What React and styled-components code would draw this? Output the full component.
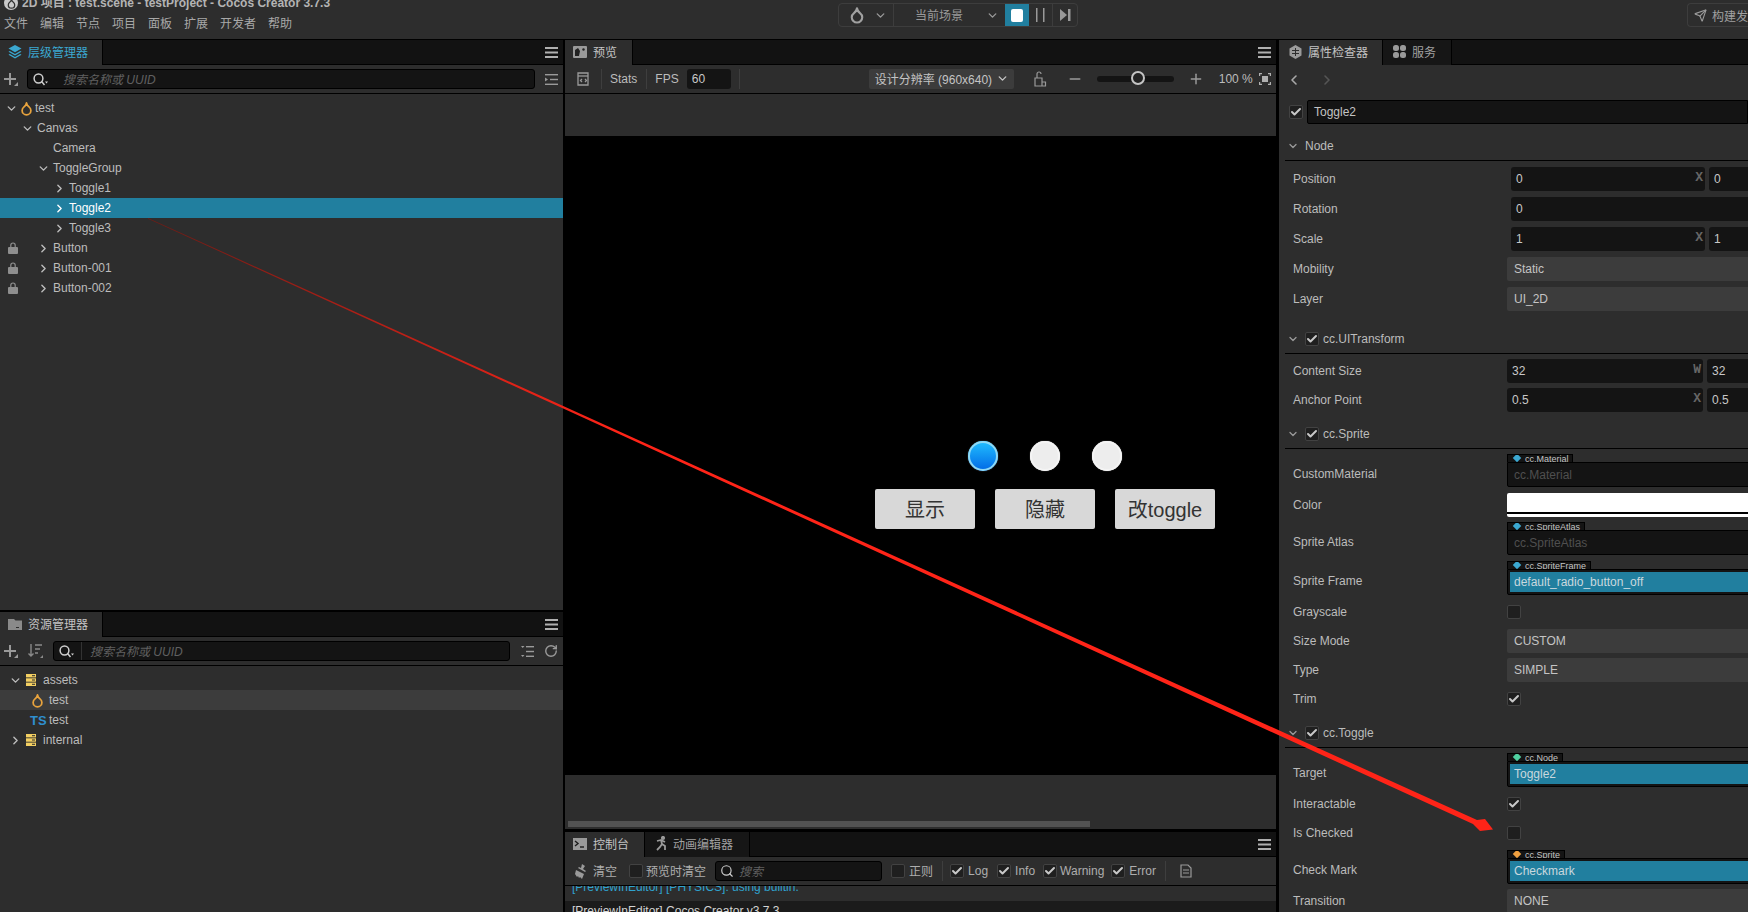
import React from 'react';
import styled, { createGlobalStyle, css } from 'styled-components';
import { Check, ChevronDown, ChevronRight, ChevronLeft, Droplet, Plus, Minus, RotateCw, Send, Search } from 'lucide-react';

const Global = createGlobalStyle`
  html, body { margin: 0; padding: 0; background: #000; overflow: hidden; }
  body { font-family: "Liberation Sans", "Noto Sans CJK SC", sans-serif; font-size: 12px; color: #bcbcbc; }
  * { box-sizing: border-box; }
`;

const ml = css`margin-left: ${p => p.$ml || 0}px;`;

const Page = styled.div`
  position: relative; width: 1748px; height: 912px; overflow: hidden;
  display: flex; flex-direction: column; background: #000;
`;
const TitleBar = styled.header`
  height: 39px; flex: none; display: flex; background: #2d2d2d; overflow: hidden;
`;
const TitleLeft = styled.div`width: 838px; flex: none; padding-left: 4px;`;
const TitleLine = styled.div`
  display: flex; align-items: center; gap: 4px; height: 14px; margin-top: -4px;
  font-size: 12px; font-weight: 700; color: #b4b4b4; white-space: nowrap; line-height: 14px;
`;
const AppLogo = styled.span`
  width: 14px; height: 14px; border-radius: 50%; background: #c9c9c9; flex: none;
  display: flex; align-items: center; justify-content: center;
`;
const MenuBar = styled.nav`display: flex; gap: 12px; margin-top: 6px; line-height: 16px; color: #a8a8a8;`;
const PlayGroup = styled.div`
  width: 240px; height: 24px; margin-top: 3px; flex: none; display: flex; align-items: stretch;
  border: 1px solid #3d3d3d; border-radius: 4px; overflow: hidden; color: #999;
`;
const PlaySeg = styled.div`
  width: ${p => p.$w}px; flex: none; display: flex; align-items: center; justify-content: ${p => p.$between ? 'space-between' : 'center'};
  padding: ${p => p.$between ? '0 6px 0 9px' : '0'};
  border-right: ${p => p.$line ? '1px solid #3d3d3d' : '0'};
  background: ${p => p.$active ? '#217f9f' : 'transparent'};
`;
const StopSquare = styled.span`width: 12px; height: 13px; background: #fff; border-radius: 2px;`;
const BuildButton = styled.div`
  margin: 3px 0 0 auto; width: 61px; height: 24px; flex: none; display: flex; align-items: center; gap: 5px;
  padding-left: 6px; border: 1px solid #3d3d3d; border-right: 0; border-radius: 4px 0 0 4px; color: #a0a0a0;
  white-space: nowrap; overflow: hidden;
  svg { flex: none; }
`;

const Main = styled.main`flex: 1; min-height: 0; display: flex; padding-top: 1px;`;
const LeftCol = styled.div`width: 563px; flex: none; display: flex; flex-direction: column; gap: 2px;`;
const CenterCol = styled.div`width: 711px; flex: none; margin-left: 2px; display: flex; flex-direction: column; gap: 3px;`;
const RightCol = styled.div`width: 469px; flex: none; margin-left: 3px; overflow: hidden;`;

const Panel = styled.section`
  background: #2d2d2d; display: flex; flex-direction: column; overflow: hidden;
  ${p => p.$h ? `height: ${p.$h}px; flex: none;` : 'flex: 1; min-height: 0;'}
`;
const TabStrip = styled.div`
  height: 25px; flex: none; display: flex; background: #121212; border-bottom: 1px solid #000;
  position: relative; padding-right: 5px; align-items: stretch;
`;
const Tab = styled.div`
  width: ${p => p.$w}px; flex: none; display: flex; align-items: center; gap: 6px; padding: 0 0 2px ${p => p.$pl || 8}px;
  background: ${p => p.$active ? '#2d2d2d' : '#161616'}; border-right: 1px solid #000;
  color: ${p => p.$blue ? '#3ba8d1' : p.$active ? '#c4c4c4' : '#a0a0a0'}; height: 25px; white-space: nowrap;
`;
const TabMenu = styled.span`margin-left: auto; align-self: center; display: flex; color: #b0b0b0;`;
const Toolbar = styled.div`
  height: 29px; flex: none; display: flex; align-items: center; border-bottom: 1px solid #000; color: #a8a8a8; white-space: nowrap;
  padding-left: ${p => p.$pl || 0}px;
`;
const ToolIcon = styled.span`${ml} display: flex; flex: none; color: #9a9a9a;`;
const ToolText = styled.span`${ml} flex: none; color: ${p => p.$color || '#aeaeae'}; ${p => p.$cjk ? 'margin-top: -2px;' : ''}`;
const Divider = styled.span`${ml} width: 1px; height: 20px; background: #3e3e3e; flex: none;`;
const SearchBox = styled.div`
  ${ml} width: ${p => p.$w}px; height: 20px; flex: none; display: flex; align-items: center;
  background: #141414; border: 1px solid #000; border-radius: 3px; color: #cfcfcf; padding-left: ${p => p.$pl || 0}px;
`;
const SearchSep = styled.span`width: 1px; height: 18px; background: #333; margin: 0 8px 0 7px;`;
const Placeholder = styled.span`${ml} font-style: italic; color: #606060; margin-top: -2px;`;
const Tree = styled.div`flex: 1; padding-top: ${p => p.$pt}px;`;
const TreeRow = styled.div`
  position: relative; height: 20px; display: flex; align-items: center; padding-left: ${p => p.$pl}px;
  color: ${p => p.$selected ? '#fff' : '#bcbcbc'};
  background: ${p => p.$selected ? '#217f9f' : p.$hover ? '#3c3c3c' : 'transparent'};
`;
const Arrow = styled.span`width: ${p => p.$w || 16}px; flex: none; display: flex; color: inherit;`;
const TreeIcon = styled.span`width: ${p => p.$w}px; flex: none; display: flex; align-items: center;`;
const LockBadge = styled.span`position: absolute; left: 8px; top: 4px; display: flex;`;
const TsMark = styled.span`width: 19px; flex: none; font-weight: 700; font-size: 13px; color: #2f8fd0;`;

const ViewTop = styled.div`height: 42px; flex: none; background: #2d2d2d;`;
const Canvas = styled.div`
  height: 639px; flex: none; background: #000; display: flex; flex-direction: column; padding: 305px 0 0 310px;
`;
const Radios = styled.div`display: flex; gap: 32px; padding-left: 93px;`;
const Radio = styled.span`
  width: 30px; height: 30px; border-radius: 50%;
  background: ${p => p.$on ? 'linear-gradient(#22c0ff, #0068e6)' : '#ededed'};
  box-shadow: inset 0 0 0 2px ${p => p.$on ? '#8fd9f5' : '#f4f4f4'}, 0 0 1px 0 #aaa;
`;
const GameButtons = styled.div`display: flex; gap: 20px; margin-top: 18px;`;
const GameButton = styled.div`
  width: 100px; height: 40px; background: #d8d8d8; border-radius: 2px; color: #333; padding-bottom: 2px;
  display: flex; align-items: center; justify-content: center; font-size: 20px;
`;
const ViewBottom = styled.div`height: 54px; flex: none; background: #2d2d2d; padding: 46px 0 0 3px;`;
const ScrollThumb = styled.div`width: 522px; height: 6px; background: #525252;`;

const Logs = styled.div`flex: 1; overflow: hidden; min-height: 0;`;
const LogLine = styled.div`
  height: 24px; padding: 3px 0 0 7px; line-height: 15px; white-space: nowrap;
  background: ${p => p.$dark ? '#1b1b1b' : '#2d2d2d'}; color: ${p => p.$blue ? '#2fa3cf' : '#d4d4d4'};
  margin-top: ${p => p.$mt || 0}px;
`;
const Check14 = styled.span`
  ${ml} width: 14px; height: 14px; flex: none; background: #1f1f1f; border: 1px solid #424242; border-radius: 2px;
  display: flex; align-items: center; justify-content: center; color: #c8c8c8;
`;
const FpsInput = styled.span`${ml} width: 44px; height: 20px; flex: none; background: #141414; border-radius: 3px; padding: 3px 5px; line-height: 14px; color: #c8c8c8;`;
const Dropdown = styled.span`
  ${ml} width: 145px; height: 20px; flex: none; background: #3c3c3c; border-radius: 2px;
  display: flex; align-items: center; justify-content: space-between; padding: 0 5px 2px 6px; color: #c4c4c4;
`;
const Slider = styled.span`
  ${ml} position: relative; width: 77px; height: 6px; background: #141414; border-radius: 3px; flex: none;
`;
const Knob = styled.span`
  position: absolute; left: 34px; top: -5px; width: 14px; height: 14px; border-radius: 50%;
  border: 2px solid #c4c4c4; background: #222;
`;

const NavRow = styled.div`height: 29px; display: flex; align-items: center; gap: 17px; padding-left: 7px; color: #a8a8a8;`;
const NameRow = styled.div`height: 24px; margin-top: 6px; display: flex; align-items: center; padding-left: 10px; gap: 4px;`;
const NameInput = styled.div`
  flex: 1; height: 24px; background: #141414; border: 1px solid #000; border-radius: 2px 0 0 2px;
  padding-left: 6px; line-height: 22px; color: #c4c4c4;
`;
const Form = styled.div`
  width: 640px; display: flex; flex-direction: column; gap: ${p => p.$gap || 5}px; margin-top: ${p => p.$mt || 5}px;
`;
const SectionHead = styled.div`
  width: 640px; height: 30px; margin: ${p => p.$mt}px 0 0 6px; display: flex; align-items: center; gap: 6px; padding-left: 2px;
  border-bottom: 1px solid #000; color: #bcbcbc;
`;
const HeadChevron = styled.span`width: 12px; display: flex; color: #9a9a9a;`;
const HeadCheck = styled.span`display: flex; margin-right: -2px;`;
const Row = styled.div`
  display: flex; align-items: ${p => p.$asset ? 'flex-start' : 'center'}; min-height: 24px; margin-top: ${p => p.$mt || 0}px;
`;
const Label = styled.span`
  width: ${p => p.$w || 228}px; flex: none; padding-left: 14px; color: #bcbcbc; ${p => p.$asset ? 'padding-top: 13px;' : ''}
`;
const NumInput = styled.div`
  position: relative; width: ${p => p.$w}px; height: 24px; flex: none; background: #141414; border-radius: 3px;
  margin-right: 4px; padding-left: ${p => p.$pl || 5}px; line-height: 24px; color: #c8c8c8;
`;
const Axis = styled.span`position: absolute; right: 2px; top: 0; color: #666; font-family: "Liberation Mono", monospace; font-size: 13px; font-weight: 700; line-height: 22px;`;
const Select = styled.div`
  width: 300px; height: 24px; flex: none; background: #3c3c3c; border-radius: 2px; padding-left: 7px; line-height: 24px; color: #c4c4c4;
`;
const ColorBox = styled.div`
  width: 300px; height: 24px; flex: none; border-radius: 2px;
  background: linear-gradient(#fff 0 19px, #000 19px 21px, #fff 21px);
`;
const AssetField = styled.div`width: 300px; flex: none; display: flex; flex-direction: column;`;
const AssetTag = styled.div`
  width: ${p => p.$w}px; height: 8px; display: flex; gap: 3px; padding-left: 6px; background: #141414; overflow: hidden;
  border: 1px solid #000; border-bottom: 0; font-size: 9px; line-height: 9px; color: #c4c4c4; white-space: nowrap;
`;
const Diamond = styled.span`
  width: 6px; height: 6px; flex: none; transform: rotate(45deg); background: ${p => p.$c}; margin: 0 2px 0 0;
`;
const AssetBox = styled.div`
  height: ${p => p.$h || 26}px; background: #141414; border: 1px solid #000; border-radius: 0 0 2px 2px; padding: 2px 0 2px 2px;
`;
const AssetValue = styled.div`
  height: 20px; line-height: 20px; padding-left: 4px; color: ${p => p.$empty ? '#4f4f4f' : '#c9d8de'};
  background: ${p => p.$empty ? 'transparent' : '#217f9f'};
`;
const Overlay = styled.svg`position: absolute; left: 0; top: 0; pointer-events: none;`;

const Hamburger = () => (
  <svg width="13" height="11" viewBox="0 0 13 11" fill="currentColor"><rect width="13" height="2" /><rect y="4.5" width="13" height="2" /><rect y="9" width="13" height="2" /></svg>
);
const LayersIcon = () => (
  <svg width="14" height="14" viewBox="0 0 14 14" fill="#3ba8d1"><path d="M7 0l6.5 3.6L7 7.2.5 3.6z" /><path d="M1.8 6L7 8.9 12.2 6l1.3.8L7 10.4.5 6.8z" /><path d="M1.8 9L7 11.9 12.2 9l1.3.8L7 13.4.5 9.8z" /></svg>
);
const FolderTabIcon = () => (
  <svg width="14" height="12" viewBox="0 0 14 12" fill="#8a8a8a"><path d="M0 1h6l1.5 1.5H14V12H0z" /><rect x="8" y="9" width="3" height="1" fill="#2d2d2d" /></svg>
);
const ImageIcon = () => (
  <svg width="14" height="12" viewBox="0 0 14 12"><rect width="14" height="12" rx="1" fill="#9a9a9a" /><path d="M2 10V4l3-2 2 3-1 5z" fill="#222" /><circle cx="10.5" cy="3.5" r="1.2" fill="#222" /></svg>
);
const HexIcon = () => (
  <svg width="13" height="14" viewBox="0 0 13 14" fill="#9a9a9a"><path d="M6.5 0l6 3.4v7.2l-6 3.4-6-3.4V3.4z" /><path d="M3 5.5h7M3 8.5h7M6.5 3v8" stroke="#2d2d2d" /></svg>
);
const BlobsIcon = () => (
  <svg width="13" height="13" viewBox="0 0 13 13" fill="#9a9a9a"><rect width="6" height="6" rx="2.5" /><rect x="7" width="6" height="6" rx="2.5" /><rect y="7" width="6" height="6" rx="2.5" /><rect x="7" y="7" width="6" height="6" rx="2.5" /></svg>
);
const TermIcon = () => (
  <svg width="14" height="12" viewBox="0 0 14 12"><rect width="14" height="12" fill="#9a9a9a" /><path d="M2 3l3 2.5L2 8" stroke="#1c1c1c" strokeWidth="1.4" fill="none" /><path d="M7 9h4" stroke="#1c1c1c" strokeWidth="1.4" /></svg>
);
const RunnerIcon = () => (
  <svg width="12" height="15" viewBox="0 0 12 15" fill="none" stroke="#9a9a9a" strokeWidth="1.8"><circle cx="8" cy="2" r="1.2" fill="#9a9a9a" /><path d="M2 5l4-1 1 4-2 3-3 3M7 8l3 2v4M6 4l4 2" /></svg>
);
const FolderDb = () => (
  <svg width="10" height="12" viewBox="0 0 10 12" fill="#f3cf62"><rect width="10" height="3.4" /><rect y="4.3" width="10" height="3.4" /><rect y="8.6" width="10" height="3.4" /><rect x="6" y="1.2" width="3" height="1" fill="#2d2d2d" /><rect x="6" y="5.5" width="3" height="1" fill="#2d2d2d" /><rect x="6" y="9.8" width="3" height="1" fill="#2d2d2d" /></svg>
);
const PlusCorner = () => (
  <svg width="14" height="14" viewBox="0 0 14 14" fill="#9a9a9a"><rect x="5" y="1" width="2" height="12" /><rect x="0" y="6" width="12" height="2" /><path d="M14 10v4h-4z" /></svg>
);
const SortIcon = () => (
  <svg width="15" height="14" viewBox="0 0 15 14" fill="none" stroke="#8a8a8a" strokeWidth="1.4"><path d="M3 0v12M0.5 9.5L3 12l2.5-2.5M7 1h7M7 5h5M7 9h3" /><path d="M15 11v3h-3z" fill="#8a8a8a" stroke="none" /></svg>
);
const ListIndent = () => (
  <svg width="13" height="11" viewBox="0 0 13 11" fill="#9a9a9a"><rect width="13" height="1.4" /><rect x="5" y="4.8" width="8" height="1.4" /><rect y="9.6" width="13" height="1.4" /><path d="M0 3.5l3 2-3 2z" /></svg>
);
const ListTree = () => (
  <svg width="13" height="11" viewBox="0 0 13 11" fill="#9a9a9a"><rect x="5" width="8" height="1.4" /><rect x="5" y="4.8" width="8" height="1.4" /><rect x="5" y="9.6" width="8" height="1.4" /><path d="M0 0h3.5L1.7 2zM0 9h3.5l-1.8 2z" /></svg>
);
const SearchDrop = () => (
  <svg width="15" height="13" viewBox="0 0 15 13" fill="none" stroke="#cfcfcf" strokeWidth="1.5"><circle cx="5.5" cy="5.5" r="4.4" /><path d="M8.6 8.6L11.5 12" /><path d="M12 8.5h3l-1.5 2z" fill="#cfcfcf" stroke="none" /></svg>
);
const PreviewFile = () => (
  <svg width="13" height="15" viewBox="0 0 13 15" fill="none" stroke="#9a9a9a" strokeWidth="1.3"><path d="M1 1h10v12H1z" /><path d="M1 4h10" /><path d="M5 7L3.5 8.5 5 10M8 7l1.5 1.5L8 10" /></svg>
);
const Broom = () => (
  <svg width="13" height="15" viewBox="0 0 13 15" fill="#9a9a9a"><path d="M7 0l3 2-2 3 3 2-1 1-7-4 1-1 2 1z" /><path d="M1 6l8 4-2 5-2-2-1 1-1-2-1 1-2-3z" /></svg>
);
const ResizeLock = () => (
  <svg width="14" height="16" viewBox="0 0 14 16" fill="none" stroke="#9a9a9a" strokeWidth="1.2"><path d="M2 7h7v8H2zM9 11h3.5v4H9z" /><path d="M4 7V3a2 2 0 0 1 4 0" /></svg>
);
const FitIcon = () => (
  <svg width="12" height="12" viewBox="0 0 12 12" fill="none" stroke="#b0b0b0" strokeWidth="1.2"><path d="M.6 3V.6H3M9 .6h2.4V3M.6 9v2.4H3M9 11.4h2.4V9" /><rect x="3" y="3" width="6" height="6" fill="#b0b0b0" stroke="none" /></svg>
);
const LogFile = () => (
  <svg width="12" height="14" viewBox="0 0 12 14" fill="none" stroke="#9a9a9a" strokeWidth="1.2"><path d="M1 1h7l3 3v9H1z" /><path d="M3 6h6M3 9h6" /></svg>
);
const PauseBars = () => (
  <svg width="11" height="14" viewBox="0 0 11 14" fill="#999"><rect x="1" width="1.5" height="14" /><rect x="8" width="1.5" height="14" /></svg>
);
const StepIcon = () => (
  <svg width="11" height="12" viewBox="0 0 11 12" fill="#999"><path d="M0 0l7 6-7 6z" /><rect x="8" width="2.5" height="12" /></svg>
);
const LockIcon = () => (
  <svg width="10" height="12" viewBox="0 0 10 12" fill="#8e8e8e"><path d="M2.2 5V3.2a2.8 2.8 0 0 1 5.6 0V5H6.6V3.2a1.6 1.6 0 0 0-3.2 0V5z" /><rect y="5" width="10" height="7" rx="1" /></svg>
);

const Tick = () => <Check size={12} strokeWidth={4} />;
const Down = ({ size = 13 }) => <ChevronDown size={size} strokeWidth={2.6} />;
const Right = ({ size = 13 }) => <ChevronRight size={size} strokeWidth={2.6} />;
const Drop = ({ c = '#e8a33d', size = 16 }) => <Droplet size={size} color={c} strokeWidth={2.8} />;

const Asset = ({ label, tag, tagW, color, value, empty, mt }) => (
  <Row $asset $mt={mt}>
    <Label $asset>{label}</Label>
    <AssetField>
      <AssetTag $w={tagW}><Diamond $c={color} />{tag}</AssetTag>
      <AssetBox $h={empty ? 25 : 26}><AssetValue $empty={empty}>{value}</AssetValue></AssetBox>
    </AssetField>
  </Row>
);

const Vector = ({ label, a, b, axis, inset }) => (
  <Row>
    <Label $w={inset ? 232 : 228}>{label}</Label>
    <NumInput $w={inset ? 194 : 196}>{a}{axis && <Axis>{axis}</Axis>}</NumInput>
    <NumInput $w={100}>{b}</NumInput>
  </Row>
);

const Option = ({ label, value }) => (
  <Row><Label>{label}</Label><Select>{value}</Select></Row>
);

const Flag = ({ label, on }) => (
  <Row><Label>{label}</Label><Check14>{on && <Tick />}</Check14></Row>
);

const Head = ({ mt, title, check = true }) => (
  <SectionHead $mt={mt}>
    <HeadChevron><Down size={12} /></HeadChevron>
    {check && <HeadCheck><Check14><Tick /></Check14></HeadCheck>}
    {title}
  </SectionHead>
);

const hierarchy = [
  { text: 'Canvas', pl: 21, open: true },
  { text: 'Camera', pl: 37 },
  { text: 'ToggleGroup', pl: 37, open: true },
  { text: 'Toggle1', pl: 53, closed: true },
  { text: 'Toggle2', pl: 53, closed: true, selected: true },
  { text: 'Toggle3', pl: 53, closed: true },
  { text: 'Button', pl: 37, closed: true, lock: true },
  { text: 'Button-001', pl: 37, closed: true, lock: true },
  { text: 'Button-002', pl: 37, closed: true, lock: true },
];

export default function App() {
  return (
    <Page>
      <Global />
      <TitleBar>
        <TitleLeft>
          <TitleLine><AppLogo><Drop c="#333" size={11} /></AppLogo>2D 项目 : test.scene - testProject - Cocos Creator 3.7.3</TitleLine>
          <MenuBar>
            {['文件', '编辑', '节点', '项目', '面板', '扩展', '开发者', '帮助'].map(m => <span key={m}>{m}</span>)}
          </MenuBar>
        </TitleLeft>
        <PlayGroup>
          <PlaySeg $w={55} $between $line><Drop c="#a0a0a0" size={18} /><Down /></PlaySeg>
          <PlaySeg $w={111} $between>
            <ToolText $ml={12} $color="#999" $cjk>当前场景</ToolText><Down />
          </PlaySeg>
          <PlaySeg $w={24} $active><StopSquare /></PlaySeg>
          <PlaySeg $w={24} $line><PauseBars /></PlaySeg>
          <PlaySeg $w={25}><StepIcon /></PlaySeg>
        </PlayGroup>
        <BuildButton><Send size={13} color="#999" />构建发布</BuildButton>
      </TitleBar>
      <Main>
        <LeftCol>
          <Panel $h={570}>
            <TabStrip>
              <Tab $w={103} $active $blue><LayersIcon />层级管理器</Tab>
              <TabMenu><Hamburger /></TabMenu>
            </TabStrip>
            <Toolbar $pl={4}>
              <ToolIcon><PlusCorner /></ToolIcon>
              <SearchBox $ml={9} $w={508} $pl={5}>
                <SearchDrop />
                <Placeholder $ml={15}>搜索名称或 UUID</Placeholder>
              </SearchBox>
              <ToolIcon $ml={10}><ListIndent /></ToolIcon>
            </Toolbar>
            <Tree $pt={4}>
              <TreeRow $pl={5}>
                <Arrow $w={14}><Down /></Arrow>
                <TreeIcon $w={16}><Drop size={15} /></TreeIcon>test
              </TreeRow>
              {hierarchy.map(r => (
                <TreeRow key={r.text} $pl={r.pl} $selected={r.selected}>
                  {r.lock && <LockBadge><LockIcon /></LockBadge>}
                  <Arrow>{r.open ? <Down /> : r.closed ? <Right /> : null}</Arrow>{r.text}
                </TreeRow>
              ))}
            </Tree>
          </Panel>
          <Panel>
            <TabStrip>
              <Tab $w={103} $active><FolderTabIcon />资源管理器</Tab>
              <TabMenu><Hamburger /></TabMenu>
            </TabStrip>
            <Toolbar $pl={4}>
              <ToolIcon><PlusCorner /></ToolIcon>
              <ToolIcon $ml={10}><SortIcon /></ToolIcon>
              <SearchBox $ml={10} $w={457} $pl={5}>
                <SearchDrop />
                <SearchSep />
                <Placeholder>搜索名称或 UUID</Placeholder>
              </SearchBox>
              <ToolIcon $ml={11}><ListTree /></ToolIcon>
              <ToolIcon $ml={10}><RotateCw size={14} strokeWidth={2.4} /></ToolIcon>
            </Toolbar>
            <Tree $pt={4}>
              <TreeRow $pl={9}><Arrow $w={17}><Down /></Arrow><TreeIcon $w={17}><FolderDb /></TreeIcon>assets</TreeRow>
              <TreeRow $pl={30} $hover><TreeIcon $w={19}><Drop size={15} /></TreeIcon>test</TreeRow>
              <TreeRow $pl={30}><TsMark>TS</TsMark>test</TreeRow>
              <TreeRow $pl={9}><Arrow $w={17}><Right /></Arrow><TreeIcon $w={17}><FolderDb /></TreeIcon>internal</TreeRow>
            </Tree>
          </Panel>
        </LeftCol>
        <CenterCol>
          <Panel $h={789}>
            <TabStrip>
              <Tab $w={68} $active><ImageIcon />预览</Tab>
              <TabMenu><Hamburger /></TabMenu>
            </TabStrip>
            <Toolbar $pl={12}>
              <ToolIcon><PreviewFile /></ToolIcon>
              <Divider $ml={11} />
              <ToolText $ml={8} $color="#bcbcbc">Stats</ToolText>
              <Divider $ml={9} />
              <ToolText $ml={8} $color="#bcbcbc">FPS</ToolText>
              <FpsInput $ml={8}>60</FpsInput>
              <Divider $ml={8} />
              <Dropdown $ml={129}>设计分辨率 (960x640)<Down /></Dropdown>
              <ToolIcon $ml={19}><ResizeLock /></ToolIcon>
              <ToolIcon $ml={20}><Minus size={16} strokeWidth={2.5} /></ToolIcon>
              <Slider $ml={14}><Knob /></Slider>
              <ToolIcon $ml={14}><Plus size={16} strokeWidth={2.2} /></ToolIcon>
              <ToolText $ml={15} $color="#bcbcbc">100 %</ToolText>
              <ToolIcon $ml={6}><FitIcon /></ToolIcon>
            </Toolbar>
            <ViewTop />
            <Canvas>
              <Radios><Radio $on /><Radio /><Radio /></Radios>
              <GameButtons>
                <GameButton>显示</GameButton>
                <GameButton>隐藏</GameButton>
                <GameButton>改toggle</GameButton>
              </GameButtons>
            </Canvas>
            <ViewBottom><ScrollThumb /></ViewBottom>
          </Panel>
          <Panel>
            <TabStrip>
              <Tab $w={80} $active><TermIcon />控制台</Tab>
              <Tab $w={105} $pl={10}><RunnerIcon />动画编辑器</Tab>
              <TabMenu><Hamburger /></TabMenu>
            </TabStrip>
            <Toolbar $pl={10}>
              <ToolIcon><Broom /></ToolIcon>
              <ToolText $ml={5} $cjk>清空</ToolText>
              <Check14 $ml={12} />
              <ToolText $ml={3} $cjk>预览时清空</ToolText>
              <SearchBox $ml={9} $w={167} $pl={4}>
                <Search size={14} strokeWidth={2} />
                <Placeholder $ml={5}>搜索</Placeholder>
              </SearchBox>
              <Check14 $ml={9} />
              <ToolText $ml={4} $cjk>正则</ToolText>
              <Divider $ml={9} />
              <Check14 $ml={7}><Tick /></Check14>
              <ToolText $ml={4}>Log</ToolText>
              <Check14 $ml={9}><Tick /></Check14>
              <ToolText $ml={4}>Info</ToolText>
              <Check14 $ml={8}><Tick /></Check14>
              <ToolText $ml={3}>Warning</ToolText>
              <Check14 $ml={7}><Tick /></Check14>
              <ToolText $ml={4}>Error</ToolText>
              <Divider $ml={9} />
              <ToolIcon $ml={14}><LogFile /></ToolIcon>
            </Toolbar>
            <Logs>
              <LogLine $blue $mt={-9}>[PreviewInEditor] [PHYSICS]: using builtin.</LogLine>
              <LogLine $dark>[PreviewInEditor] Cocos Creator v3.7.3</LogLine>
            </Logs>
          </Panel>
        </CenterCol>
        <RightCol>
          <Panel $h={873}>
            <TabStrip>
              <Tab $w={104} $active $pl={10}><HexIcon />属性检查器</Tab>
              <Tab $w={69} $pl={10}><BlobsIcon />服务</Tab>
            </TabStrip>
            <NavRow><ChevronLeft size={16} strokeWidth={2.4} /><ChevronRight size={16} strokeWidth={2.4} color="#555" /></NavRow>
            <NameRow>
              <Check14><Tick /></Check14>
              <NameInput>Toggle2</NameInput>
            </NameRow>
            <Head mt={7} title="Node" check={false} />
            <Form $gap={6} $mt={6}>
              <Vector inset label="Position" a="0" b="0" axis="X" />
              <Row><Label $w={232}>Rotation</Label><NumInput $w={300}>0</NumInput></Row>
              <Vector inset label="Scale" a="1" b="1" axis="X" />
              <Option label="Mobility" value="Static" />
              <Option label="Layer" value="UI_2D" />
            </Form>
            <Head mt={13} title="cc.UITransform" />
            <Form>
              <Vector label="Content Size" a="32" b="32" axis="W" />
              <Vector label="Anchor Point" a="0.5" b="0.5" axis="X" />
            </Form>
            <Head mt={7} title="cc.Sprite" />
            <Form>
              <Asset label="CustomMaterial" tag="cc.Material" tagW={66} color="#3ba8d1" value="cc.Material" empty />
              <Row $mt={1}><Label>Color</Label><ColorBox /></Row>
              <Asset label="Sprite Atlas" tag="cc.SpriteAtlas" tagW={78} color="#3ba8d1" value="cc.SpriteAtlas" empty />
              <Asset label="Sprite Frame" tag="cc.SpriteFrame" tagW={84} color="#3ba8d1" value="default_radio_button_off" mt={1} />
              <Flag label="Grayscale" />
              <Option label="Size Mode" value="CUSTOM" />
              <Option label="Type" value="SIMPLE" />
              <Flag label="Trim" on />
            </Form>
            <Head mt={7} title="cc.Toggle" />
            <Form>
              <Asset label="Target" tag="cc.Node" tagW={56} color="#4fd0a0" value="Toggle2" />
              <Flag label="Interactable" on />
              <Flag label="Is Checked" />
              <Asset label="Check Mark" tag="cc.Sprite" tagW={58} color="#f0a040" value="Checkmark" />
              <Option label="Transition" value="NONE" />
            </Form>
          </Panel>
        </RightCol>
      </Main>
      <Overlay width="1748" height="912" viewBox="0 0 1748 912">
        <defs>
          <linearGradient id="arrowFade" gradientUnits="userSpaceOnUse" x1="148" y1="218" x2="620" y2="433">
            <stop offset="0" stopColor="#6e1a14" />
            <stop offset="1" stopColor="#ff2418" />
          </linearGradient>
        </defs>
        <polygon fill="url(#arrowFade)" points="148,218 1477,820 1485,819 1493,829.5 1480,831 1473,824 148,218.8" />
      </Overlay>
    </Page>
  );
}
